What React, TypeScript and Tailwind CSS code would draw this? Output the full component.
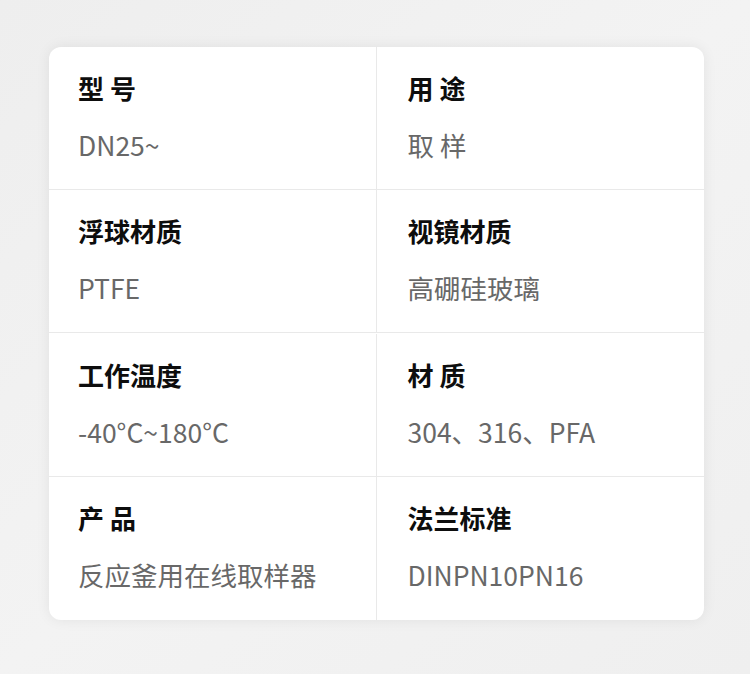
import React from "react";

const items: [string, string][] = [
  ["型 号", "DN25~"],
  ["用 途", "取 样"],
  ["浮球材质", "PTFE"],
  ["视镜材质", "高硼硅玻璃"],
  ["工作温度", "-40°C~180°C"],
  ["材 质", "304、316、PFA"],
  ["产 品", "反应釜用在线取样器"],
  ["法兰标准", "DINPN10PN16"],
];

export default function App() {
  return (
    <div
      className="w-[750px] h-[674px] bg-gradient-to-br from-[#eeeeee] via-[#f3f3f3] to-[#efefef] pt-[47px] pl-[49px]"
      style={{ fontFamily: '"Noto Sans CJK SC", "Noto Sans", sans-serif' }}
    >
      <div className="w-[655px] h-[573px] bg-white rounded-[12px] shadow-[0_0_14px_rgba(0,0,0,0.07)] grid grid-cols-2 overflow-hidden">
        {items.map(([label, value], i) => {
          const left = i % 2 === 0;
          const lastRow = i >= 6;
          return (
            <div
              key={i}
              className={
                "h-[143px] flex flex-col pt-[23px] " +
                (left ? "pl-[29px] border-r border-[#e9e9e9] " : "pl-[31px] ") +
                (lastRow ? "" : "border-b border-[#e9e9e9]")
              }
            >
              <div className="text-[26px] leading-[36px] font-bold text-[#0d0d0d]">{label}</div>
              <div className="mt-[21px] text-[26.5px] leading-[36px] text-[#686868]">{value}</div>
            </div>
          );
        })}
      </div>
    </div>
  );
}
